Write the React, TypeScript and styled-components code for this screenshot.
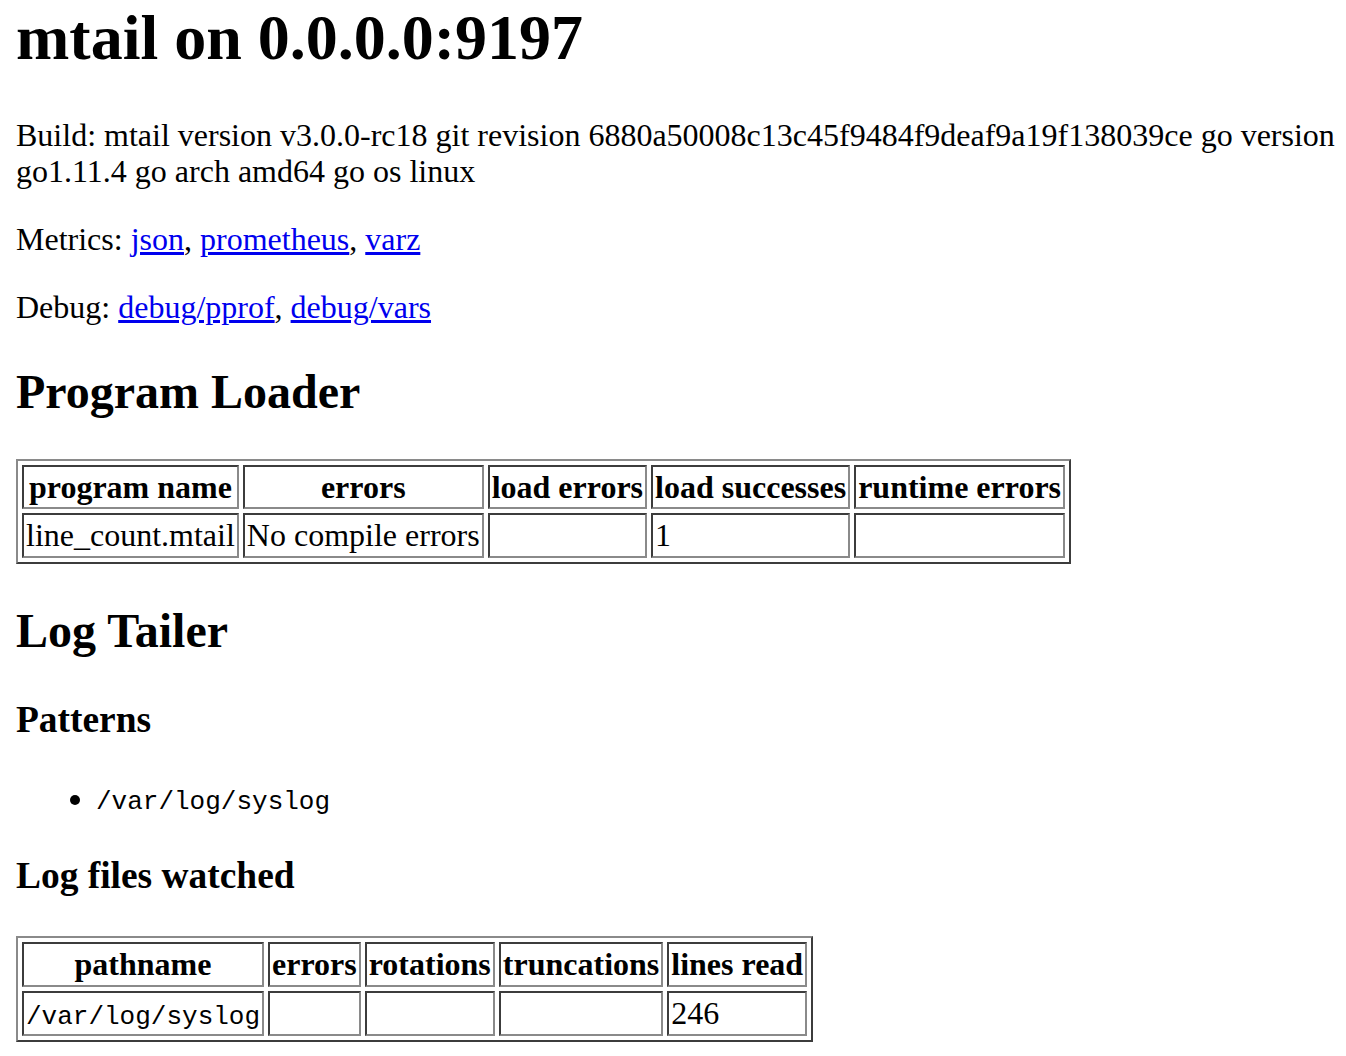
import React from "react";
import styled, { createGlobalStyle } from "styled-components";

const GlobalStyle = createGlobalStyle`
  html, body {
    background: #ffffff;
  }
  body {
    margin: 0 0 0 16px;
    padding-top: 2px;
    color: #000000;
    font-family: "Liberation Serif", "Times New Roman", serif;
    font-size: 32px;
    line-height: 1.125;
  }
`;

const Page = styled.div`
  display: block;
`;

const Title = styled.h1`
  font-size: 64px;
  font-weight: bold;
  margin: 0 0 42.88px;
`;

const SectionTitle = styled.h2`
  font-size: 48px;
  font-weight: bold;
  margin: 39.84px 0;
`;

const SubTitle = styled.h3`
  font-size: 37.44px;
  font-weight: bold;
  line-height: 1.2;
  margin: 37.44px 0;
`;

const Para = styled.p`
  margin: 32px 0;
`;

const Link = styled.a`
  color: #0000ee;
  text-decoration: underline;
`;

const Mono = styled.code`
  font-family: "Liberation Mono", "Courier New", monospace;
  font-size: 26px;
  line-height: 1;
`;

const List = styled.ul`
  margin: 32px 0;
  padding-left: 80px;
  list-style: disc;
`;

const Table = styled.table`
  border-collapse: separate;
  border-spacing: 4px;
  border: 2px solid;
  border-color: #8a8a8a #3c3c3c #3c3c3c #8a8a8a;
`;

const HeadCell = styled.th`
  font-weight: bold;
  text-align: center;
  line-height: 1.15;
  padding: 2px;
  border: 2px solid;
  border-color: #3c3c3c #8a8a8a #8a8a8a #3c3c3c;
`;

const Cell = styled.td`
  text-align: left;
  line-height: 1.15;
  padding: 2px;
  border: 2px solid;
  border-color: #3c3c3c #8a8a8a #8a8a8a #3c3c3c;
`;

const programs = [
  { name: "line_count.mtail", errors: "No compile errors", loadErrors: "", loadSuccesses: "1", runtimeErrors: "" },
];

const logs = [{ path: "/var/log/syslog", errors: "", rotations: "", truncations: "", lines: "246" }];

export default function App() {
  return (
    <Page>
      <GlobalStyle />
      <Title>mtail on 0.0.0.0:9197</Title>
      <Para>
        Build: mtail version v3.0.0-rc18 git revision 6880a50008c13c45f9484f9deaf9a19f138039ce go version
        go1.11.4 go arch amd64 go os linux
      </Para>
      <Para>
        Metrics: <Link href="#">json</Link>, <Link href="#">prometheus</Link>, <Link href="#">varz</Link>
      </Para>
      <Para>
        Debug: <Link href="#">debug/pprof</Link>, <Link href="#">debug/vars</Link>
      </Para>

      <SectionTitle>Program Loader</SectionTitle>
      <Table>
        <tbody>
          <tr>
            <HeadCell>program name</HeadCell>
            <HeadCell>errors</HeadCell>
            <HeadCell>load errors</HeadCell>
            <HeadCell>load successes</HeadCell>
            <HeadCell>runtime errors</HeadCell>
          </tr>
          {programs.map((p) => (
            <tr key={p.name}>
              <Cell>{p.name}</Cell>
              <Cell>{p.errors}</Cell>
              <Cell>{p.loadErrors}</Cell>
              <Cell>{p.loadSuccesses}</Cell>
              <Cell>{p.runtimeErrors}</Cell>
            </tr>
          ))}
        </tbody>
      </Table>

      <SectionTitle>Log Tailer</SectionTitle>
      <SubTitle>Patterns</SubTitle>
      <List>
        <li>
          <Mono>/var/log/syslog</Mono>
        </li>
      </List>
      <SubTitle>Log files watched</SubTitle>
      <Table>
        <tbody>
          <tr>
            <HeadCell>pathname</HeadCell>
            <HeadCell>errors</HeadCell>
            <HeadCell>rotations</HeadCell>
            <HeadCell>truncations</HeadCell>
            <HeadCell>lines read</HeadCell>
          </tr>
          {logs.map((l) => (
            <tr key={l.path}>
              <Cell>
                <Mono>{l.path}</Mono>
              </Cell>
              <Cell>{l.errors}</Cell>
              <Cell>{l.rotations}</Cell>
              <Cell>{l.truncations}</Cell>
              <Cell>{l.lines}</Cell>
            </tr>
          ))}
        </tbody>
      </Table>
    </Page>
  );
}
